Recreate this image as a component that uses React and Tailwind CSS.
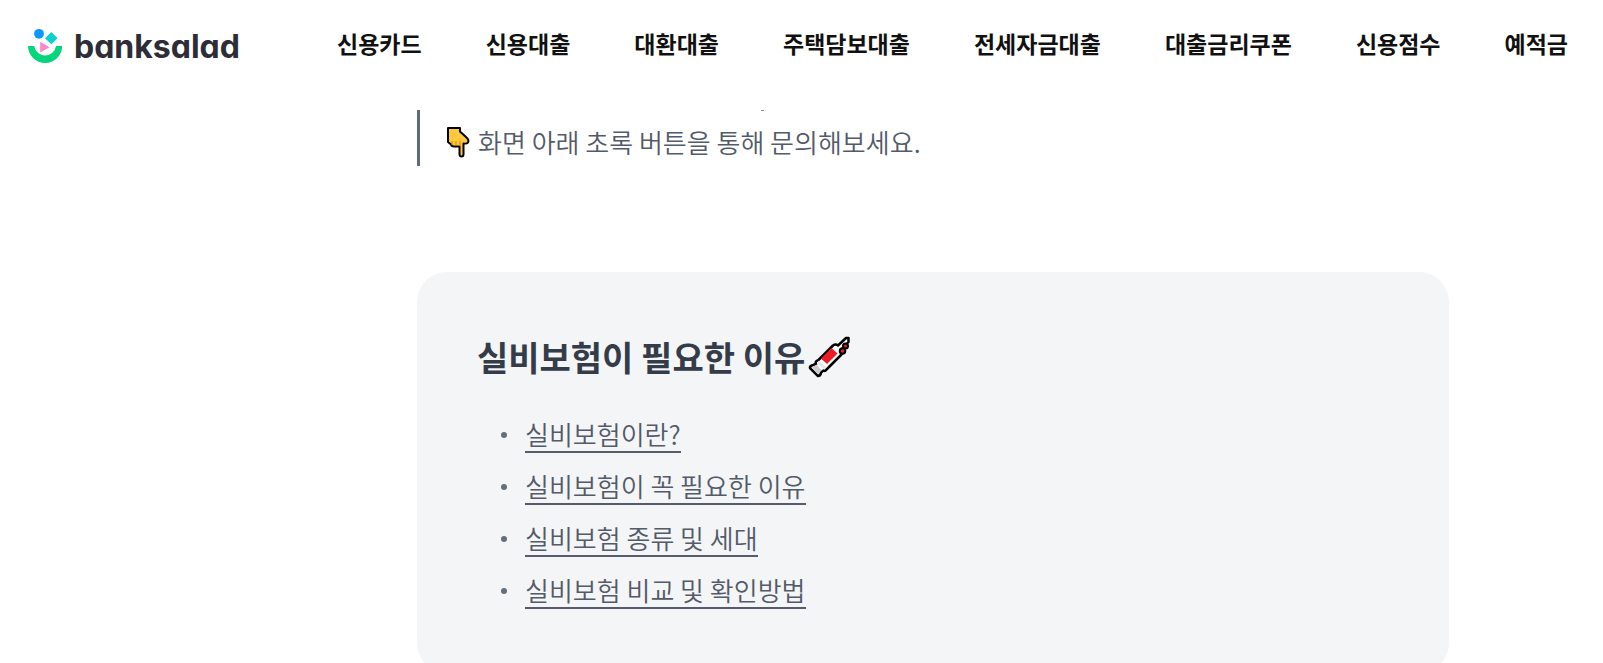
const menu = ["신용카드", "신용대출", "대환대출", "주택담보대출", "전세자금대출", "대출금리쿠폰", "신용점수", "예적금"];

const topics = ["실비보험이란?", "실비보험이 꼭 필요한 이유", "실비보험 종류 및 세대", "실비보험 비교 및 확인방법"];

function Logo() {
  return (
    <a href="#" className="flex shrink-0 items-end gap-[10px] font-['Inter',sans-serif] text-[32px] leading-[34px] font-bold text-[#2d2d37] [font-feature-settings:'cv11']">
      <svg viewBox="0 0 36 36" className="size-9 shrink-0" aria-hidden="true">
        <circle cx="11" cy="5.8" r="4.9" fill="#0a97ff" />
        <path d="M23.3 4 29.6 10.3 23.3 16.3 17 10.3Z" fill="#0bd0cf" />
        <path d="M12.2 13.8V24.4L21.6 19.3Z" fill="#fb87cd" />
        <path d="M0 18H6.2A11 11 0 0 0 28 18H34.2A17.1 17.1 0 0 1 0 18Z" fill="#06d67b" />
      </svg>
      banksalad
    </a>
  );
}

function PointDown() {
  return (
    <svg viewBox="0 0 26 32" className="h-8 w-[26px] shrink-0" role="img" aria-label="아래">
      <path d="M2 2H14V5.5L20 11Q23.5 14 22 16.5Q21 18 17.5 17.5V28Q17.5 30.5 15.5 30.5T13.5 28V20.5H8Q5.5 20.5 5 18.5L2 16Z" fill="#ffc83d" stroke="#000" strokeWidth="2" strokeLinejoin="round" />
      <path d="M6 19V15M10 19.5V15M14 20V15" fill="none" stroke="#d67d00" strokeWidth="1" />
    </svg>
  );
}

function Syringe() {
  return (
    <svg viewBox="0 0 42 42" className="size-[42px] shrink-0" role="img" aria-label="주사기">
      <path d="M40.5 2H38L30 9.5Q27.5 7.5 25 9.5L10 24.5Q7 25 8 28L5 29Q1.5 30 2 32L10 40Q12.5 40 13 36.5L15.5 34.5Q17.5 35.5 18.5 33.5L33 19Q35 17 33 14L40.5 6Z" fill="#fff" stroke="#000" strokeWidth="2.5" strokeLinejoin="round" />
      <path d="M8.5 28.5 13.5 34 10 38.5 3.5 32Z" fill="#ccc" />
      <path d="M10 25.5 17 32.5" stroke="#e6e6e6" strokeWidth="3" />
      <path d="M13 22.5 23.5 12 29.5 17.5 19 28Z" fill="#ed1c24" />
      <circle cx="37.5" cy="10" r="2.5" fill="#ed1c24" stroke="#000" strokeWidth="2" />
      <circle cx="34.5" cy="15" r="2.8" fill="#ed1c24" stroke="#000" strokeWidth="2" />
    </svg>
  );
}

export default function App() {
  return (
    <div className="h-screen overflow-hidden bg-white font-['Noto_Sans_CJK_KR',sans-serif]">
      <header className="flex h-[110px] items-start justify-between pt-7 pr-[35px] pl-7">
        <Logo />
        <nav aria-label="주요 메뉴">
          <ul className="flex gap-16 whitespace-nowrap">
            {menu.map((item) => (
              <li key={item}>
                <a href="#" className="block text-[23px] leading-[30px] font-bold text-[#111]">{item}</a>
              </li>
            ))}
          </ul>
        </nav>
      </header>
      <main className="mr-[154px] ml-[417px]">
        <blockquote className="relative flex h-14 items-center gap-[6px] border-l-3 border-[#5f6b7a] pt-2 pl-[26px] text-[26px] leading-[40px] font-[350] text-[#535a68]">
          <span className="absolute top-0 left-[341px] h-px w-[3px] bg-[#8a8f99]" aria-hidden="true" />
          <PointDown />
          <p>화면 아래 초록 버튼을 통해 문의해보세요.</p>
        </blockquote>
        <section className="mt-[106px] rounded-[30px] bg-[#f3f5f7] px-15 pt-[59px] pb-14">
          <h2 className="flex items-center gap-[3px] text-[34px] leading-[52px] font-bold text-[#333c48]">
            실비보험이 필요한 이유
            <Syringe />
          </h2>
          <ul className="mt-[26px] pl-6">
            {topics.map((topic) => (
              <li key={topic} className="flex h-[52px] items-center gap-[18px]">
                <span className="size-[6px] shrink-0 rounded-full bg-[#646f7c]" />
                <a href="#" className="border-b-2 border-[#555b6b] text-[26px] leading-[34px] font-[350] text-[#535a68]">{topic}</a>
              </li>
            ))}
          </ul>
        </section>
      </main>
    </div>
  );
}
